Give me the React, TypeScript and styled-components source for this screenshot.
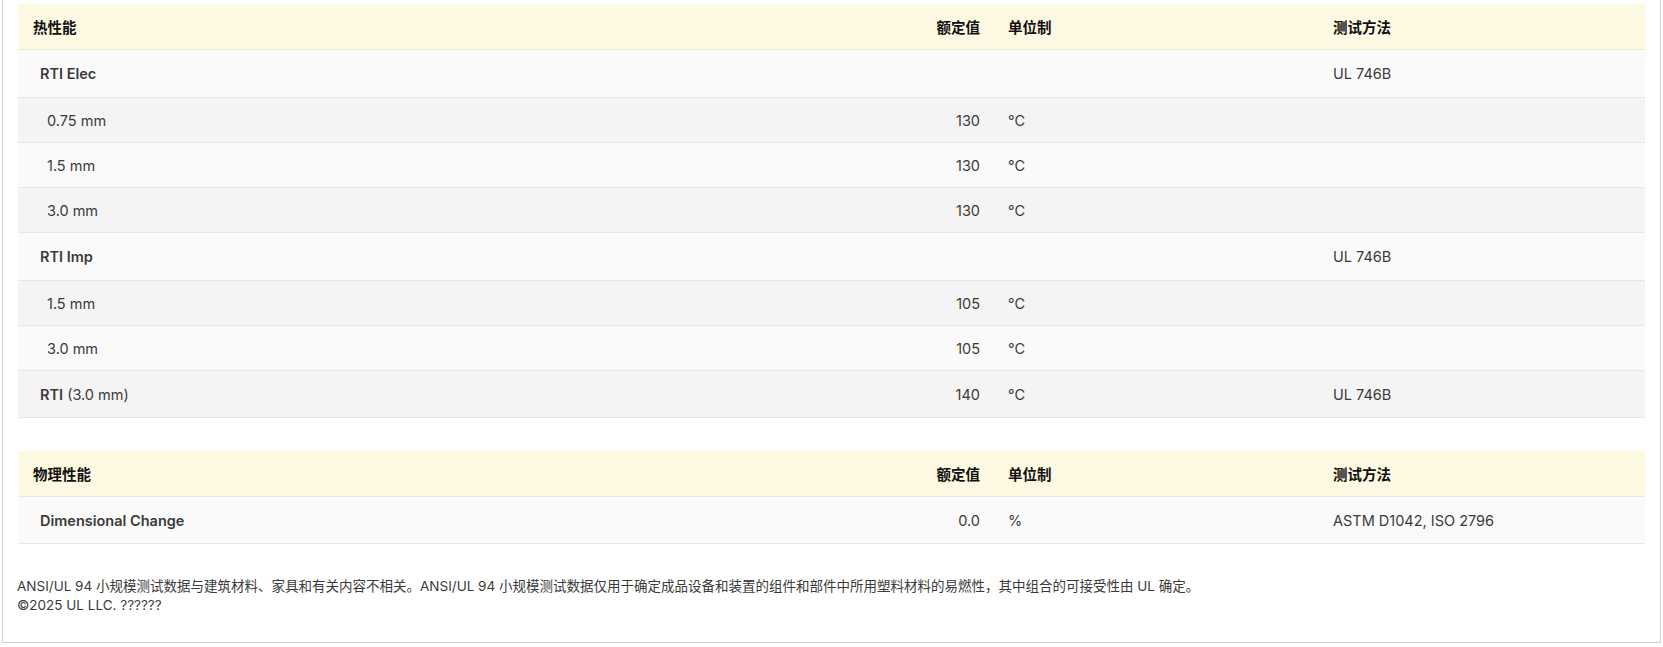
import React from "react";
import styled, { createGlobalStyle } from "styled-components";

const Global = createGlobalStyle`
  body { margin: 0; background: #fff; font-family: Inter, "Open Sans", "Noto Sans CJK SC", sans-serif; }
`;

const Frame = styled.div`
  margin: 0 2px;
  height: 643px;
  box-sizing: border-box;
  border: 1px solid #cfcfcf;
  border-top: none;
  padding: 4px 15px 0 15px;
`;

const Table = styled.div`
  display: grid;
  grid-template-columns: 1fr 113px 325px 327px;
  margin-bottom: 33px;
`;

const Cell = styled.div<{ $kind: "head" | "row"; $alt?: boolean; $right?: boolean; $indent?: number; $bold?: boolean; $h: number }>`
  height: ${(p) => p.$h}px;
  display: flex;
  align-items: center;
  justify-content: ${(p) => (p.$right ? "flex-end" : "flex-start")};
  padding: 0 ${(p) => (p.$right ? 13 : 0)}px 0 ${(p) => p.$indent ?? 15}px;
  font-size: 14.5px;
  font-weight: ${(p) => (p.$kind === "head" || p.$bold ? 600 : 400)};
  color: ${(p) => (p.$kind === "head" ? "#111" : "#3a3a3a")};
  background: ${(p) => (p.$kind === "head" ? "#fdf8e1" : p.$alt ? "#f4f4f4" : "#fafafa")};
  border-bottom: 1px solid ${(p) => (p.$kind === "head" ? "#ece8d4" : "#e6e6e6")};
  box-sizing: border-box;
  white-space: nowrap;
`;

const Light = styled.span`
  font-weight: 400;
`;

const Note = styled.div`
  font-size: 13.5px;
  color: #3a3a3a;
  line-height: 19px;
  margin-left: -1px;
`;

type Row = { name: React.ReactNode; v: string; u: string; m: string; group: boolean };

const Section = ({ title, rows }: { title: string; rows: Row[] }) => (
  <Table>
    <Cell $kind="head" $h={46}>{title}</Cell>
    <Cell $kind="head" $h={46} $right>额定值</Cell>
    <Cell $kind="head" $h={46}>单位制</Cell>
    <Cell $kind="head" $h={46}>测试方法</Cell>
    {rows.map((r, i) => {
      const alt = i % 2 === 1;
      const h = r.group ? 48 : 45;
      const last = i === rows.length - 1;
      const hh = last ? h - 1 : h;
      return (
        <React.Fragment key={i}>
          <Cell $kind="row" $h={hh} $alt={alt} $indent={r.group ? 22 : 29} $bold={r.group}>{r.name}</Cell>
          <Cell $kind="row" $h={hh} $alt={alt} $right>{r.v}</Cell>
          <Cell $kind="row" $h={hh} $alt={alt}>{r.u}</Cell>
          <Cell $kind="row" $h={hh} $alt={alt}>{r.m}</Cell>
        </React.Fragment>
      );
    })}
  </Table>
);

const thermal: Row[] = [
  { name: "RTI Elec", v: "", u: "", m: "UL 746B", group: true },
  { name: "0.75 mm", v: "130", u: "°C", m: "", group: false },
  { name: "1.5 mm", v: "130", u: "°C", m: "", group: false },
  { name: "3.0 mm", v: "130", u: "°C", m: "", group: false },
  { name: "RTI Imp", v: "", u: "", m: "UL 746B", group: true },
  { name: "1.5 mm", v: "105", u: "°C", m: "", group: false },
  { name: "3.0 mm", v: "105", u: "°C", m: "", group: false },
  { name: <>RTI <Light>&nbsp;(3.0 mm)</Light></>, v: "140", u: "°C", m: "UL 746B", group: true },
];

const physical: Row[] = [
  { name: "Dimensional Change", v: "0.0", u: "%", m: "ASTM D1042, ISO 2796", group: true },
];

export default function App() {
  return (
    <>
      <Global />
      <Frame>
        <Section title="热性能" rows={thermal} />
        <Section title="物理性能" rows={physical} />
        <Note>
          ANSI/UL 94 小规模测试数据与建筑材料、家具和有关内容不相关。ANSI/UL 94 小规模测试数据仅用于确定成品设备和装置的组件和部件中所用塑料材料的易燃性，其中组合的可接受性由 UL 确定。
          <br />
          ©2025 UL LLC. ??????
        </Note>
      </Frame>
    </>
  );
}
